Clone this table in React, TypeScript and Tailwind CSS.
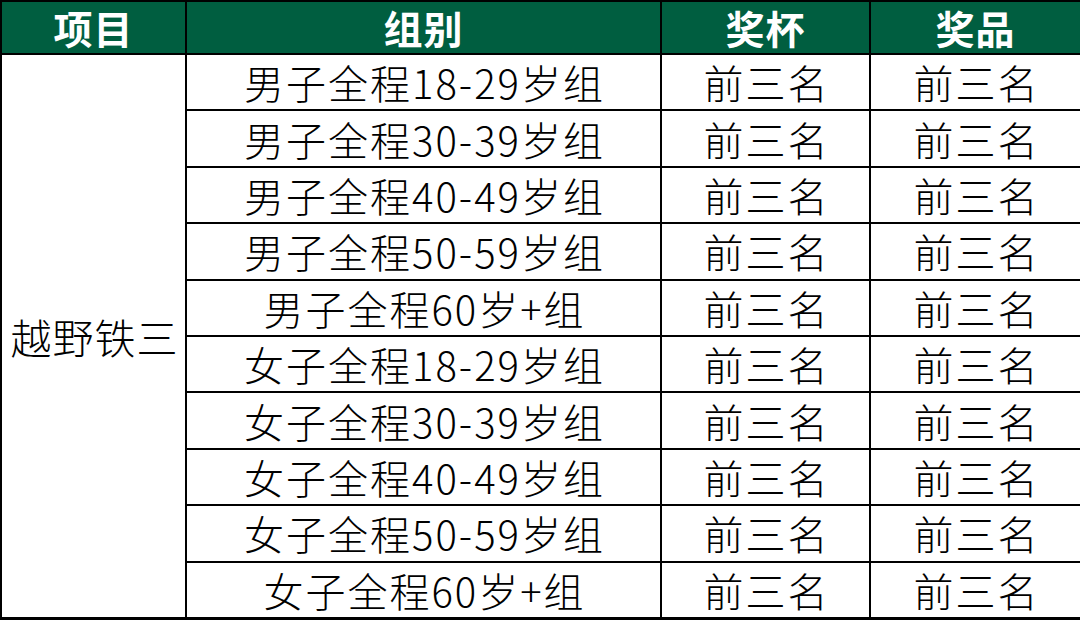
const groups = [
  "男子全程18-29岁组",
  "男子全程30-39岁组",
  "男子全程40-49岁组",
  "男子全程50-59岁组",
  "男子全程60岁+组",
  "女子全程18-29岁组",
  "女子全程30-39岁组",
  "女子全程40-49岁组",
  "女子全程50-59岁组",
  "女子全程60岁+组",
];

const font = { fontFamily: '"Microsoft YaHei", "Noto Sans CJK SC", "Noto Sans", sans-serif' };

function Head({ children }: { children: string }) {
  return (
    <div className="flex items-center justify-center bg-[#005e40] text-[39px] font-bold leading-none tracking-[1px] text-white">
      {children}
    </div>
  );
}

function Cell({ children, col, row }: { children: string; col: number; row: number }) {
  return (
    <div
      className="flex items-center justify-center bg-white pl-[2px] text-[40px] font-light leading-none tracking-[2px] text-black"
      style={{ gridColumn: col, gridRow: row }}
    >
      {children}
    </div>
  );
}

export default function App() {
  return (
    <div
      style={font}
      className="grid h-[620px] w-[1080px] grid-cols-[183px_473px_207px_1fr] grid-rows-[51px_repeat(10,1fr)] gap-[2px] bg-black pb-[3px] pl-[2px] pt-[2px]"
    >
      <Head>项目</Head>
      <Head>组别</Head>
      <Head>奖杯</Head>
      <Head>奖品</Head>
      <div className="row-span-10 flex items-center justify-center bg-white pl-[2px] text-[41px] font-light leading-none tracking-[1px] text-black">
        越野铁三
      </div>
      {groups.map((g, i) => (
        <div key={g} className="contents">
          <Cell col={2} row={i + 2}>{g}</Cell>
          <Cell col={3} row={i + 2}>前三名</Cell>
          <Cell col={4} row={i + 2}>前三名</Cell>
        </div>
      ))}
    </div>
  );
}
